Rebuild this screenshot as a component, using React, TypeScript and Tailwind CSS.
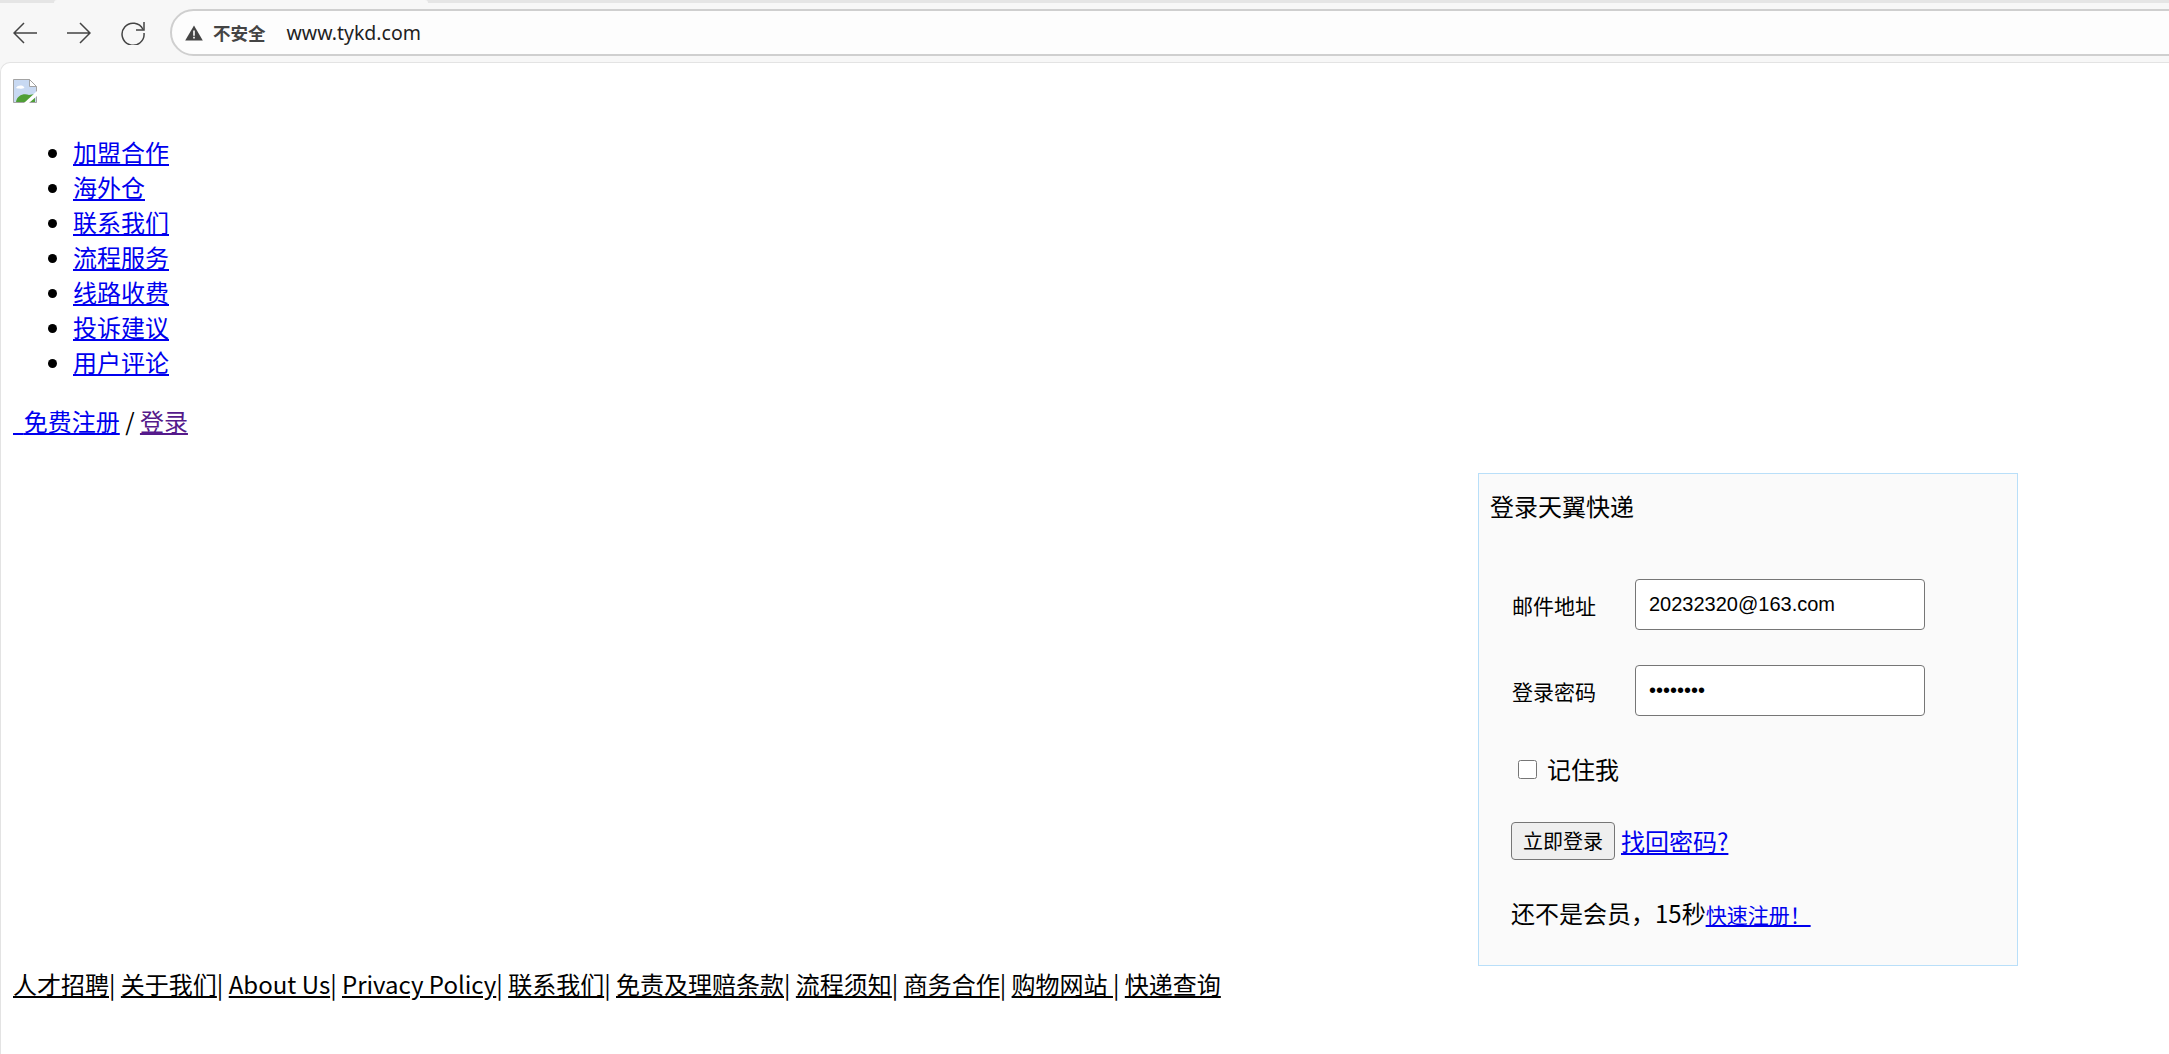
import React from 'react';

const cjk = 'font-["Noto_Sans_CJK_SC","Liberation_Sans",sans-serif]';

const navItems = ['加盟合作', '海外仓', '联系我们', '流程服务', '线路收费', '投诉建议', '用户评论'];
const footerLinks = [
  '人才招聘',
  '关于我们',
  'About Us',
  'Privacy Policy',
  '联系我们',
  '免责及理赔条款',
  '流程须知',
  '商务合作',
  '购物网站\u00a0',
];

function BrokenImage() {
  return (
    <svg width="24" height="24" viewBox="0 0 24 24" className="block">
      <path d="M0.5 0.5H16.5L23.5 7.5V23.5H0.5Z" fill="#c8d9f2" stroke="#a3a3a3" />
      <path d="M16.5 0.5V7.5H23.5Z" fill="#fff" stroke="#a3a3a3" />
      <path d="M3 9c2-3 6-3 8-1s-6 2-8 1Z" fill="#fff" />
      <path d="M3 23c1-7 8-9 13-7l6-1v8Z" fill="#4f9f36" />
      <path d="M11 24 24 12v5l-8 7Z" fill="#fff" />
    </svg>
  );
}

function BrowserBar() {
  return (
    <div className="h-[62px] bg-[#f7f7f7] flex flex-col overflow-hidden">
      <div className="h-[3px] bg-[#e5e5e5] flex shrink-0">
        <div className="ml-[54px] w-[374px] bg-[#f7f7f7] rounded-t" />
      </div>
      <div className="flex items-start mt-[6px]">
        <div className="flex items-center pl-[13px] h-[47px] gap-[30px] w-[170px] shrink-0">
          <svg width="24" height="24" viewBox="0 0 24 24" fill="none" stroke="#444" strokeWidth="1.5">
            <path d="M24 12H1M11 2 1 12l10 10" />
          </svg>
          <svg width="24" height="24" viewBox="0 0 24 24" fill="none" stroke="#444" strokeWidth="1.5">
            <path d="M0 12h23M13 2l10 10-10 10" />
          </svg>
          <svg width="24" height="24" viewBox="0 0 24 24" fill="none" stroke="#444" strokeWidth="1.5">
            <path d="M22 8.5A11 11 0 1 0 23 12" />
            <path d="M23 1v8h-8" />
          </svg>
        </div>
        <div className="flex items-center h-[47px] w-[2100px] shrink-0 rounded-l-[24px] border-2 border-[#cfcfcf] bg-[#fdfdfd] pl-[13px]">
          <svg width="18" height="16" viewBox="0 0 18 16">
            <path d="M9 0.5 17.8 15.5H0.2Z" fill="#444" />
            <path d="M8.2 5.5h1.6v5.2H8.2ZM8.2 11.8h1.6v1.6H8.2Z" fill="#fff" />
          </svg>
          <span className={`${cjk} ml-[10px] text-[17.5px] font-bold text-[#444] leading-none`}>不安全</span>
          <span className={`font-["Noto_Sans",sans-serif] ml-[21px] text-[19.5px] text-[#1f1f1f] leading-none`}>www.tykd.com</span>
        </div>
      </div>
    </div>
  );
}

function LoginBox() {
  return (
    <div className={`${cjk} ml-[1465px] w-[540px] h-[493px] border border-[#b9dff9] bg-[#fafafa] text-black`}>
      <div className="pl-[11px] pt-[14px] text-[24px] leading-[35px]">登录天翼快递</div>
      <form className="pl-[32px]">
        <div className="flex items-center mt-[56px] h-[51px]">
          <label className="w-[124px] text-[21px] leading-[30px] mt-[1px] pl-[1px]">邮件地址</label>
          <input
            readOnly
            value="20232320@163.com"
            className='w-[290px] h-[51px] rounded-[4px] border-[1.5px] border-[#767676] bg-white px-[13px] text-[20px] text-black outline-none font-["Liberation_Sans",sans-serif]'
          />
        </div>
        <div className="flex items-center mt-[35px] h-[51px]">
          <label className="w-[124px] text-[21px] leading-[30px] mt-[1px] pl-[1px]">登录密码</label>
          <input
            readOnly
            type="password"
            value="12345678"
            className='w-[290px] h-[51px] rounded-[4px] border-[1.5px] border-[#767676] bg-white px-[13px] text-[20px] text-black outline-none font-["Liberation_Sans",sans-serif]'
          />
        </div>
        <label className="flex items-center mt-[36px] h-[35px] pl-[7px] text-[24px] leading-[35px]">
          <input type="checkbox" className="w-[19px] h-[19px] m-0 appearance-auto" />
          <span className="ml-[10px] -mt-[3px]">记住我</span>
        </label>
        <div className="flex items-center mt-[35px] h-[38px]">
          <button
            type="button"
            className="w-[104px] h-[38px] rounded-[4px] border-[1.5px] border-[#767676] bg-[#efefef] text-[20px] leading-none text-black"
          >
            立即登录
          </button>
          <a href="#" className="ml-[6px] -mt-[2px] text-[24px] leading-[35px] text-[#0000ee] underline">找回密码?</a>
        </div>
        <div className="flex items-baseline mt-[35px] text-[24px] leading-[35px]">
          <span>还不是会员，15秒</span>
          <a href="#" className="text-[21px] text-[#0000ee] underline">快速注册！</a>
        </div>
      </form>
    </div>
  );
}

export default function App() {
  return (
    <div className="h-[1054px] w-[2169px] overflow-hidden bg-[#f7f7f7]">
      <BrowserBar />
      <div className={`${cjk} h-[992px] bg-white border-l border-t border-[#e3e3e3] rounded-tl-[10px] pl-[12px] pt-[16px] text-[24px] leading-[35px] text-black`}>
        <BrokenImage />
        <ul className="list-disc pl-[60px] mt-[31px]">
          {navItems.map((item) => (
            <li key={item}>
              <a href="#" className="text-[#0000ee] underline">{item}</a>
            </li>
          ))}
        </ul>
        <p className="mt-[24px]">
          <a href="#" className="text-[#0000ee] underline">{'\u00a0\u00a0'}免费注册</a>
          {' / '}
          <a href="#" className="text-[#551a8b] underline">登录</a>
        </p>
        <div className="mt-[35px]">
          <LoginBox />
        </div>
        <p className="mt-0">
          {footerLinks.map((item) => (
            <React.Fragment key={item}>
              <a href="#" className="text-black underline">{item}</a>
              {'| '}
            </React.Fragment>
          ))}
          <a href="#" className="text-black underline">快递查询</a>
        </p>
      </div>
    </div>
  );
}
